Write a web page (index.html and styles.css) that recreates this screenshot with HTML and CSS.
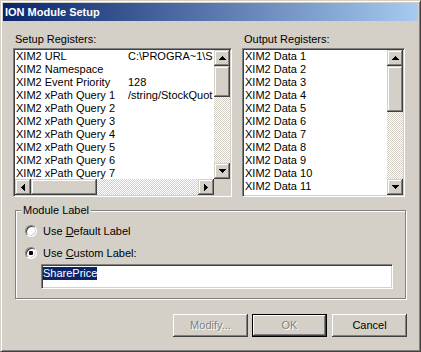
FILE: index.html
```html
<!DOCTYPE html>
<html lang="en">
<head>
  <meta charset="UTF-8">
  <title>ION Module Setup</title>
  <link rel="stylesheet" href="styles.css">
</head>
<body>
  <div class="window">
    <div class="titlebar">ION Module Setup</div>
    <div class="client">
      <div class="registers">
        <div class="setup-col">
          <div class="caption">Setup Registers:</div>
          <div class="listbox setup-list">
            <div class="list-rows">
              <div class="row"><span>XIM2 URL</span><span>C:\PROGRA~1\S</span></div>
              <div class="row"><span>XIM2 Namespace</span><span></span></div>
              <div class="row"><span>XIM2 Event Priority</span><span>128</span></div>
              <div class="row"><span>XIM2 xPath Query 1</span><span>/string/StockQuot</span></div>
              <div class="row"><span>XIM2 xPath Query 2</span><span></span></div>
              <div class="row"><span>XIM2 xPath Query 3</span><span></span></div>
              <div class="row"><span>XIM2 xPath Query 4</span><span></span></div>
              <div class="row"><span>XIM2 xPath Query 5</span><span></span></div>
              <div class="row"><span>XIM2 xPath Query 6</span><span></span></div>
              <div class="row"><span>XIM2 xPath Query 7</span><span></span></div>
            </div>
            <div class="vscroll">
              <div class="sb-btn"><svg width="7" height="4"><rect x="3" y="0" width="1" height="1"/><rect x="2" y="1" width="3" height="1"/><rect x="1" y="2" width="5" height="1"/><rect x="0" y="3" width="7" height="1"/></svg></div>
              <div class="sb-thumb setup-vthumb"></div>
              <div class="sb-track"></div>
              <div class="sb-btn"><svg width="7" height="4"><rect x="0" y="0" width="7" height="1"/><rect x="1" y="1" width="5" height="1"/><rect x="2" y="2" width="3" height="1"/><rect x="3" y="3" width="1" height="1"/></svg></div>
            </div>
            <div class="hscroll">
              <div class="sb-btn"><svg width="4" height="7"><rect x="0" y="3" width="1" height="1"/><rect x="1" y="2" width="1" height="3"/><rect x="2" y="1" width="1" height="5"/><rect x="3" y="0" width="1" height="7"/></svg></div>
              <div class="sb-thumb hthumb"></div>
              <div class="sb-track"></div>
              <div class="sb-btn"><svg width="4" height="7"><rect x="0" y="0" width="1" height="7"/><rect x="1" y="1" width="1" height="5"/><rect x="2" y="2" width="1" height="3"/><rect x="3" y="3" width="1" height="1"/></svg></div>
            </div>
            <div class="corner"></div>
          </div>
        </div>
        <div class="output-col">
          <div class="caption">Output Registers:</div>
          <div class="listbox output-list">
            <div class="list-rows">
              <div class="row">XIM2 Data 1</div>
              <div class="row">XIM2 Data 2</div>
              <div class="row">XIM2 Data 3</div>
              <div class="row">XIM2 Data 4</div>
              <div class="row">XIM2 Data 5</div>
              <div class="row">XIM2 Data 6</div>
              <div class="row">XIM2 Data 7</div>
              <div class="row">XIM2 Data 8</div>
              <div class="row">XIM2 Data 9</div>
              <div class="row">XIM2 Data 10</div>
              <div class="row">XIM2 Data 11</div>
            </div>
            <div class="vscroll">
              <div class="sb-btn"><svg width="7" height="4"><rect x="3" y="0" width="1" height="1"/><rect x="2" y="1" width="3" height="1"/><rect x="1" y="2" width="5" height="1"/><rect x="0" y="3" width="7" height="1"/></svg></div>
              <div class="sb-thumb output-vthumb"></div>
              <div class="sb-track"></div>
              <div class="sb-btn"><svg width="7" height="4"><rect x="0" y="0" width="7" height="1"/><rect x="1" y="1" width="5" height="1"/><rect x="2" y="2" width="3" height="1"/><rect x="3" y="3" width="1" height="1"/></svg></div>
            </div>
          </div>
        </div>
      </div>

      <fieldset class="group">
        <legend>Module Label</legend>
        <div class="radio-row">
          <span class="radio"></span>
          <span>Use <u>D</u>efault Label</span>
        </div>
        <div class="radio-row">
          <span class="radio checked"><span class="dot"></span></span>
          <span>Use <u>C</u>ustom Label:</span>
        </div>
        <div class="textbox"><span class="selected">SharePrice</span></div>
      </fieldset>

      <div class="buttons">
        <div class="btn disabled">Modify...</div>
        <div class="btn default disabled ok-btn">OK</div>
        <div class="btn cancel-btn">Cancel</div>
      </div>
    </div>
  </div>
</body>
</html>
```

FILE: styles.css
```css
* {
  margin: 0;
  padding: 0;
  box-sizing: border-box;
  font-family: "Liberation Sans", Arial, sans-serif;
  font-size: 11px;
}
body {
  background: #d4d0c8;
}
.window {
  width: 421px;
  height: 352px;
  background: #d4d0c8;
  border: 1px solid;
  border-color: #d4d0c8 #404040 #404040 #d4d0c8;
  box-shadow: inset 1px 1px #fff, inset -1px -1px #808080;
  padding: 2px;
  display: flex;
  flex-direction: column;
}
.titlebar {
  height: 18px;
  line-height: 18px;
  padding-left: 2px;
  color: #fff;
  font-weight: bold;
  background: linear-gradient(to right, #0a246a, #a6caf0);
}
.client {
  padding: 12px 0 0 10px;
  width: 404px;
}
.registers {
  display: flex;
  gap: 10px;
}
.caption {
  line-height: 13px;
  padding-left: 2px;
  margin-bottom: 2px;
}
.listbox {
  height: 149px;
  background: #fff;
  border: 1px solid;
  border-color: #808080 #fff #fff #808080;
  box-shadow: inset 1px 1px #404040, inset -1px -1px #d4d0c8;
  padding: 1px;
  display: grid;
  grid-template-columns: minmax(0, 1fr) 16px;
}
.setup-list {
  width: 219px;
  grid-template-rows: minmax(0, 1fr) 16px;
}
.output-list {
  width: 163px;
  grid-template-rows: minmax(0, 1fr);
}
.list-rows {
  overflow: hidden;
  background: #fff;
}
.row {
  height: 13px;
  line-height: 13px;
  padding-left: 1px;
  white-space: nowrap;
  display: grid;
  grid-template-columns: 112px minmax(0, 1fr);
}
.output-list .row {
  display: block;
}
.row span {
  overflow: hidden;
}
.vscroll {
  display: flex;
  flex-direction: column;
}
.hscroll {
  display: flex;
}
.sb-btn, .sb-thumb {
  flex: none;
  width: 16px;
  height: 16px;
  background: #d4d0c8;
  box-shadow: inset -1px -1px #404040, inset 1px 1px #d4d0c8, inset -2px -2px #808080, inset 2px 2px #fff;
  display: flex;
  align-items: center;
  justify-content: center;
}
.sb-btn svg {
  fill: #000;
  display: block;
}
.setup-vthumb {
  height: 31px;
}
.output-vthumb {
  height: 46px;
}
.hthumb {
  width: 66px;
}
.sb-track {
  flex: 1;
  background: repeating-conic-gradient(#d4d0c8 0 25%, #fff 0 50%) 0 0 / 2px 2px;
}
.corner {
  background: #d4d0c8;
}
.group {
  margin: 7px 0 0 2px;
  width: 391px;
  border: 1px solid #808080;
  box-shadow: 1px 1px #fff, inset 1px 1px #fff;
  padding: 3px 9px 9px 9px;
}
.group legend {
  margin-left: -4px;
  padding: 0 2px;
  line-height: 13px;
  background: #d4d0c8;
}
.radio-row {
  height: 22px;
  display: flex;
  align-items: center;
  gap: 6px;
  line-height: 13px;
}
.radio {
  width: 12px;
  height: 12px;
  border-radius: 50%;
  border: 1px solid;
  border-color: #808080 #fff #fff #808080;
  box-shadow: inset 1px 1px #404040, inset -1px -1px #d4d0c8;
  background: #fff;
  display: flex;
  align-items: center;
  justify-content: center;
}
.dot {
  width: 4px;
  height: 4px;
  border-radius: 1px;
  background: #000;
}
.textbox {
  margin-left: 16px;
  width: 352px;
  height: 25px;
  background: #fff;
  border: 1px solid;
  border-color: #808080 #fff #fff #808080;
  box-shadow: inset 1px 1px #404040, inset -1px -1px #d4d0c8;
  padding: 2px 0 0 1px;
}
.selected {
  display: inline-block;
  line-height: 13px;
  background: #0a246a;
  color: #fff;
}
.buttons {
  display: flex;
  justify-content: flex-end;
  margin-top: 15px;
  width: 394px;
}
.btn {
  width: 75px;
  height: 23px;
  line-height: 23px;
  text-align: center;
  background: #d4d0c8;
  box-shadow: inset -1px -1px #404040, inset 1px 1px #fff, inset -2px -2px #808080, inset 2px 2px #d4d0c8;
}
.btn.default {
  border: 1px solid #000;
  line-height: 21px;
}
.btn.disabled {
  color: #808080;
  text-shadow: 1px 1px #fff;
}
.ok-btn {
  margin-left: 4px;
}
.cancel-btn {
  margin-left: 5px;
}
```
